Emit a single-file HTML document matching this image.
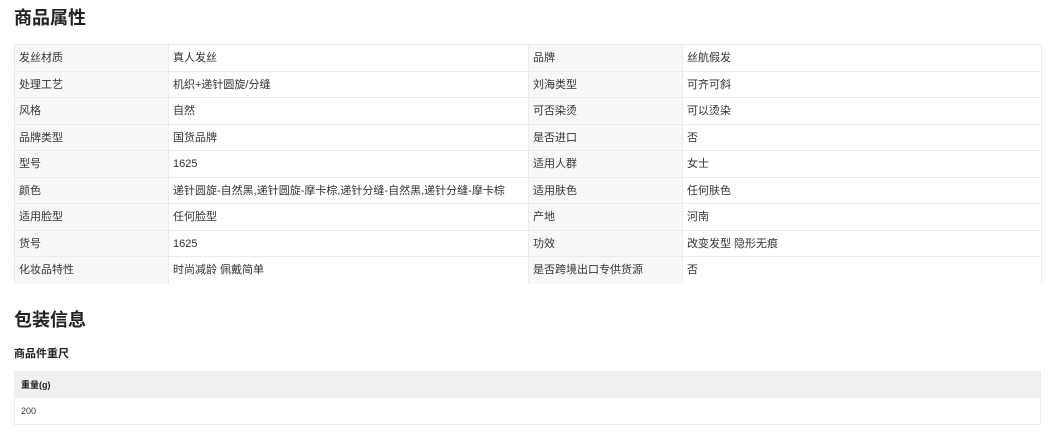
<!DOCTYPE html>
<html><head><meta charset="utf-8"><style>
*{margin:0;padding:0;box-sizing:border-box}
body{width:1060px;height:440px;background:#fff;font-family:"Liberation Sans","Noto Sans CJK SC",sans-serif;color:#333;position:relative;overflow:hidden}
h2{position:absolute;left:14px;font-size:18px;font-weight:bold;color:#222;line-height:24px}
.t{position:absolute;left:14px;top:44px;width:1028px;border-top:1px solid #ebebeb;border-left:1px solid #ebebeb;border-right:1px solid #ebebeb}
.r{display:flex;height:26.55px;border-bottom:1px solid #ebebeb}
.r:last-child{border-bottom:none}
.r div{font-size:11px;line-height:26px;padding-left:4px;white-space:nowrap;overflow:hidden}
.l{width:154px;background:#f8f8f8;border-right:1px solid #ebebeb}
.v{width:360px;border-right:1px solid #ebebeb}
.v2{flex:1}
</style></head><body>
<h2 style="top:6px">商品属性</h2>
<div class="t">
<div class="r"><div class="l">发丝材质</div><div class="v">真人发丝</div><div class="l">品牌</div><div class="v2">丝航假发</div></div>
<div class="r"><div class="l">处理工艺</div><div class="v">机织+递针圆旋/分缝</div><div class="l">刘海类型</div><div class="v2">可齐可斜</div></div>
<div class="r"><div class="l">风格</div><div class="v">自然</div><div class="l">可否染烫</div><div class="v2">可以烫染</div></div>
<div class="r"><div class="l">品牌类型</div><div class="v">国货品牌</div><div class="l">是否进口</div><div class="v2">否</div></div>
<div class="r"><div class="l">型号</div><div class="v">1625</div><div class="l">适用人群</div><div class="v2">女士</div></div>
<div class="r"><div class="l">颜色</div><div class="v">递针圆旋-自然黑,递针圆旋-摩卡棕,递针分缝-自然黑,递针分缝-摩卡棕</div><div class="l">适用肤色</div><div class="v2">任何肤色</div></div>
<div class="r"><div class="l">适用脸型</div><div class="v">任何脸型</div><div class="l">产地</div><div class="v2">河南</div></div>
<div class="r"><div class="l">货号</div><div class="v">1625</div><div class="l">功效</div><div class="v2">改变发型 隐形无痕</div></div>
<div class="r"><div class="l">化妆品特性</div><div class="v">时尚减龄 佩戴简单</div><div class="l">是否跨境出口专供货源</div><div class="v2">否</div></div>
</div>
<h2 style="top:308px">包装信息</h2>
<div style="position:absolute;left:14px;top:345px;font-size:11px;font-weight:bold;color:#222">商品件重尺</div>
<div style="position:absolute;left:14px;top:371px;width:1027px;height:54px;border-left:1px solid #ebebeb;border-right:1px solid #ebebeb;border-bottom:1px solid #ebebeb">
<div style="height:27px;background:#f0f0f0;font-size:9px;font-weight:bold;line-height:28px;padding-left:6px;color:#222">重量(g)</div>
<div style="height:26px;font-size:9px;line-height:26px;padding-left:6px">200</div>
</div>
</body></html>
